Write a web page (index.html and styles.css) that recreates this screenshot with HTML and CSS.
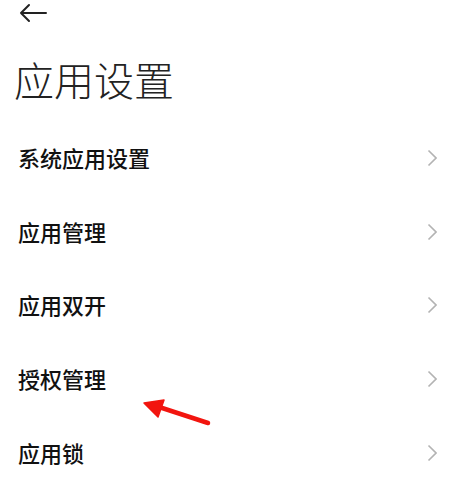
FILE: index.html
```html
<!DOCTYPE html>
<html lang="zh">
<head>
<meta charset="utf-8">
<link rel="stylesheet" href="styles.css">
</head>
<body>
<div class="page">
  <div class="header">
    <svg class="back" width="28" height="20" viewBox="0 0 28 20"><path d="M27 10H2M10 2L2 10L10 18" fill="none" stroke="#222" stroke-width="2" stroke-linecap="round" stroke-linejoin="round"/></svg>
  </div>
  <h1 class="title">应用设置</h1>
  <ul class="list">
    <li class="row"><span class="label">系统应用设置</span><svg class="chev" width="10" height="18" viewBox="0 0 10 18"><polyline points="1.5,1.5 9,9 1.5,16.5" fill="none" stroke="#b3b3b3" stroke-width="1.6"/></svg></li>
    <li class="row"><span class="label">应用管理</span><svg class="chev" width="10" height="18" viewBox="0 0 10 18"><polyline points="1.5,1.5 9,9 1.5,16.5" fill="none" stroke="#b3b3b3" stroke-width="1.6"/></svg></li>
    <li class="row"><span class="label">应用双开</span><svg class="chev" width="10" height="18" viewBox="0 0 10 18"><polyline points="1.5,1.5 9,9 1.5,16.5" fill="none" stroke="#b3b3b3" stroke-width="1.6"/></svg></li>
    <li class="row"><span class="label">授权管理</span><svg class="chev" width="10" height="18" viewBox="0 0 10 18"><polyline points="1.5,1.5 9,9 1.5,16.5" fill="none" stroke="#b3b3b3" stroke-width="1.6"/></svg></li>
    <li class="row"><span class="label">应用锁</span><svg class="chev" width="10" height="18" viewBox="0 0 10 18"><polyline points="1.5,1.5 9,9 1.5,16.5" fill="none" stroke="#b3b3b3" stroke-width="1.6"/></svg></li>
  </ul>
  <svg class="annot" width="452" height="488" viewBox="0 0 452 488">
    <line x1="208" y1="423" x2="156" y2="406" stroke="#f2150f" stroke-width="4.5" stroke-linecap="round"/>
    <polygon points="144,403 164,400 158,417" fill="#f2150f" stroke="#f2150f" stroke-width="1.5" stroke-linejoin="round"/>
  </svg>
</div>
</body>
</html>
```
FILE: styles.css
```css
html, body {
  margin: 0;
  padding: 0;
  background: #ffffff;
}
.page {
  position: relative;
  width: 452px;
  height: 488px;
  overflow: hidden;
  font-family: "Noto Sans CJK SC", "Noto Sans", sans-serif;
}
.header {
  height: 25px;
  display: flex;
  align-items: center;
  padding-left: 19px;
}
.back {
  display: block;
}
.title {
  margin: 34px 0 0 0;
  padding-left: 14px;
  font-size: 40px;
  line-height: 40px;
  font-weight: 300;
  color: #222222;
}
.list {
  list-style: none;
  margin: 22px 0 0 0;
  padding: 0;
}
.row {
  height: 73.75px;
  display: flex;
  align-items: center;
  justify-content: space-between;
  padding: 0 15px 0 18px;
}
.label {
  font-size: 22px;
  line-height: 22px;
  font-weight: 500;
  color: #111111;
  position: relative;
  top: -1px;
}
.chev {
  display: block;
}
.annot {
  position: absolute;
  left: 0;
  top: 0;
  pointer-events: none;
}
```
